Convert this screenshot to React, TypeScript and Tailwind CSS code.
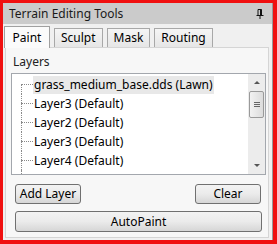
const layers = [
  'grass_medium_base.dds (Lawn)',
  'Layer3 (Default)',
  'Layer2 (Default)',
  'Layer3 (Default)',
  'Layer4 (Default)',
]

const tabs = ['Paint', 'Sculpt', 'Mask', 'Routing']

function Pin() {
  return (
    <svg width="8" height="10" viewBox="0 0 8 10" className="block">
      <path d="M2 0.5h3.5v5.5M2 0.5v5.5" stroke="#111" strokeWidth="1" fill="none" />
      <rect x="4" y="0.5" width="1.5" height="5.5" fill="#111" />
      <path d="M0.5 6.5h7" stroke="#111" strokeWidth="1" />
      <path d="M4 7v3" stroke="#111" strokeWidth="1" />
    </svg>
  )
}

function WinButton({ label, className }: { label: string; className: string }) {
  return (
    <button
      className={
        'flex items-center justify-center rounded-[3px] border border-[#707070] bg-gradient-to-b from-[#f3f3f3] via-[#ebebeb] to-[#d6d6d6] text-[12px] leading-none text-black ' +
        className
      }
    >
      {label}
    </button>
  )
}

export default function App() {
  return (
    <div className="h-[244px] w-[277px] bg-[#f01010] pb-[4px] pl-[3px] pr-[4px] pt-[3px] font-['Noto_Sans',sans-serif] text-[12px] text-black">
      <div className="flex h-full flex-col border-r border-[#999] bg-[#f0f0f0]">
        <div className="flex h-[21px] items-center justify-between bg-[#cbcbcb] pl-[6px] pr-[8px]">
          <span className="text-[#1a1a1a]">Terrain Editing Tools</span>
          <Pin />
        </div>

        <div className="flex h-[23px] items-end gap-[4px] pl-[1px]">
          {tabs.map((t, i) =>
            i === 0 ? (
              <div
                key={t}
                className="relative z-10 -mb-px flex h-[22px] w-[46px] items-center justify-center border border-b-0 border-[#a0a0a0] bg-[#fbfbfb]"
              >
                {t}
              </div>
            ) : (
              <div
                key={t}
                className="flex h-[19px] items-center justify-center border border-b-0 border-[#a8a8a8] bg-gradient-to-b from-[#f5f5f5] to-[#e6e6e6] px-[6px]"
              >
                {t}
              </div>
            )
          )}
        </div>

        <div className="mb-[2px] ml-[2px] mr-[3px] flex flex-1 flex-col border border-[#d5d5d5] bg-[#f7f7f7] pt-[6px]">
          <div className="pl-[7px] leading-[16px] text-[#222]">Layers</div>

          <div className="ml-[5px] mr-[2px] mt-[3px] flex h-[102px] border border-[#a3a7ad] bg-white">
            <div className="flex flex-1 flex-col pt-px">
              {layers.map((l, i) => (
                <div key={i} className="flex h-[19px] shrink-0 items-stretch">
                  <div className="w-[9px]" />
                  <div className="flex w-[12px] flex-col">
                    <div className={'h-[9px] ' + (i === 0 ? '' : 'border-l border-dotted border-[#8a8a8a]')} />
                    <div className="flex-1 border-l border-t border-dotted border-[#8a8a8a]" />
                  </div>
                  <div className="flex items-center">
                    <span className={'px-[1px] leading-[18px] ' + (i === 0 ? 'bg-[#e8e8e8]' : '')}>{l}</span>
                  </div>
                </div>
              ))}
              <div className="ml-[9px] flex-1 border-l border-dotted border-[#8a8a8a]" />
            </div>

            <div className="flex w-[17px] flex-col bg-[#ececec]">
              <div className="flex h-[17px] items-center justify-center">
                <div className="h-0 w-0 border-x-[3px] border-b-[3px] border-x-transparent border-b-[#555]" />
              </div>
              <div className="mx-[1px] flex h-[27px] items-center justify-center rounded-[2px] border border-[#9a9a9a] bg-gradient-to-r from-[#f2f2f2] to-[#dcdcdc]">
                <div className="flex flex-col gap-[1px]">
                  <div className="h-px w-[6px] bg-[#666]" />
                  <div className="h-px w-[6px] bg-[#666]" />
                  <div className="h-px w-[6px] bg-[#666]" />
                </div>
              </div>
              <div className="flex-1" />
              <div className="flex h-[17px] items-center justify-center">
                <div className="h-0 w-0 border-x-[3px] border-t-[3px] border-x-transparent border-t-[#555]" />
              </div>
            </div>
          </div>

          <div className="mt-[9px] flex justify-between pl-[9px] pr-[7px]">
            <WinButton label="Add Layer" className="h-[20px] w-[66px]" />
            <WinButton label="Clear" className="h-[20px] w-[66px]" />
          </div>
          <div className="mt-[7px] pl-[9px] pr-[6px]">
            <WinButton label="AutoPaint" className="h-[21px] w-full" />
          </div>
        </div>
      </div>
    </div>
  )
}
